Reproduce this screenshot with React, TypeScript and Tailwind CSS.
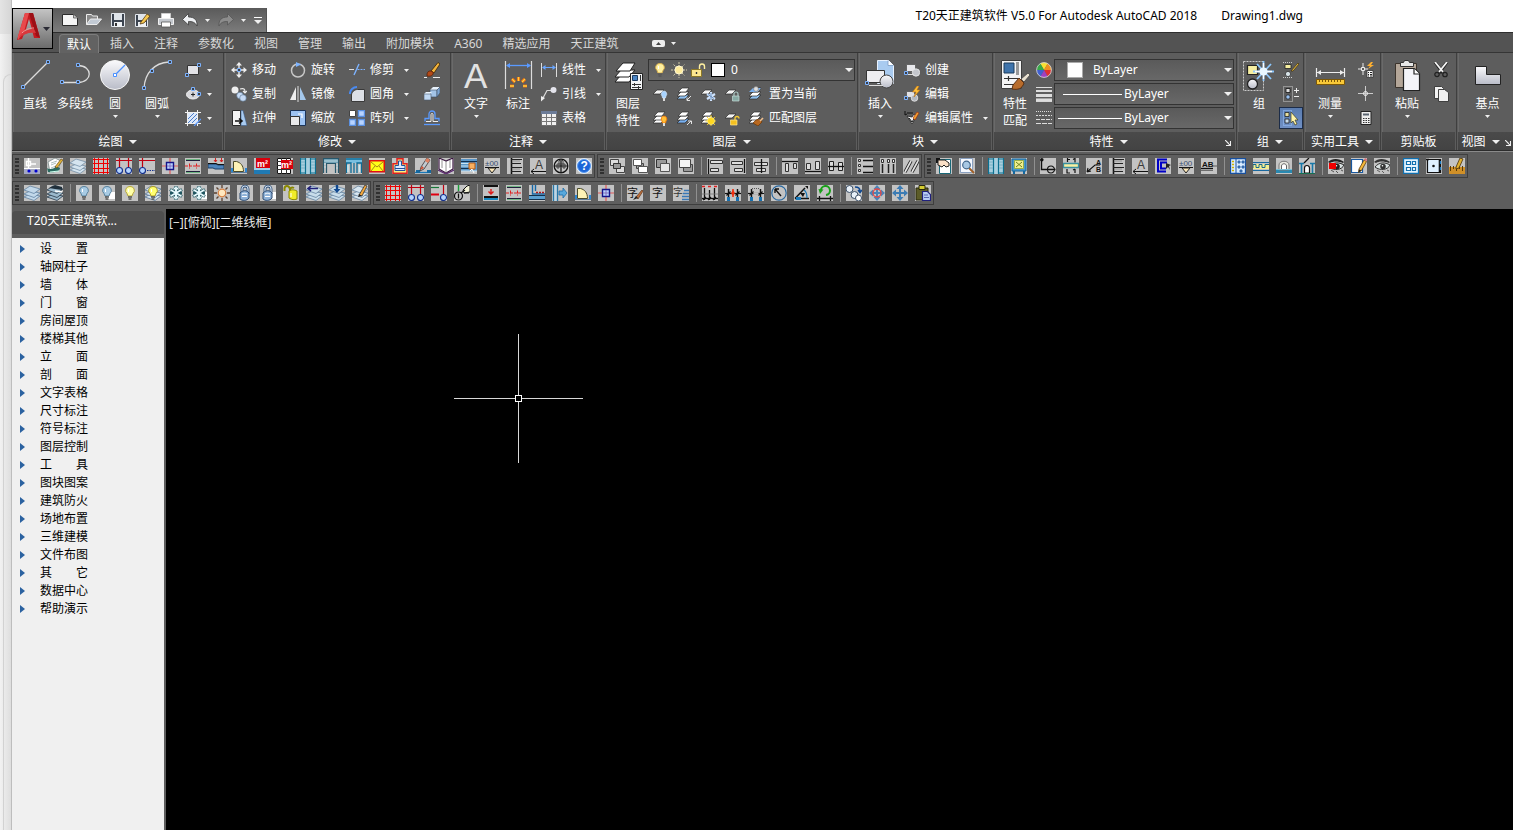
import { useState } from 'react';
import type { ReactNode } from 'react';
import clsx from 'clsx';

// [path, fill, stroke, stroke width, dash] or a text label
type PathShape = [string, string?, string?, number?, string?];
interface TextShape {
    text: string;
    x: number;
    y: number;
    size: number;
    fill: string;
    bold?: boolean;
}
type Shape = PathShape | TextShape;

const circle = (x: number, y: number, r: number) =>
    `M${x - r} ${y}a${r} ${r} 0 1 0 ${r * 2} 0a${r} ${r} 0 1 0 ${-r * 2} 0z`;
const box = (x: number, y: number, w: number, h: number) => `M${x} ${y}h${w}v${h}h${-w}z`;
const node = (x: number, y: number): Shape => [box(x - 1.5, y - 1.5, 3, 3), '#3c4048', '#7db3ff', 1];

const N = 'none';

// ---------- shared pieces ----------

const stack = (fill: string, edge: string): Shape[] => [
    ['M0 12l6-3 10 2-6 4.500z', fill, edge, 0.7],
    ['M0 9l6-3 10 2-6 4.500z', fill, edge, 0.7],
    ['M0 5l6-4 10 3-6 4.500z', fill, edge, 0.7],
];

const sheets = (bottom: string): Shape[] => [
    ['M1 13h8l4-4H5z', bottom, '#2c2c2c', 0.7],
    ['M1 10h8l4-4H5z', '#fff', '#2c2c2c', 0.7],
    ['M2 6h8l3-4H6z', '#fff', '#2c2c2c', 0.7],
];

const sheet: Shape = ['M1 8h7l4-4H5z', '#f4f4f4', '#2c2c2c', 0.7];

const bulb = (fill: string, edge: string): Shape[] => [
    ['M8 1.500a4 4 0 0 0-3 7l1 2.500h4l1-2.500a4 4 0 0 0-3-7z', fill, edge, 1],
    ['M6 12h4M6.500 14h3', N, '#555', 1.3],
    ['M6.500 4v3', N, '#fff', 1],
];

const snow: Shape[] = [
    ['M8 1v14M2 4.500l12 7M2 11.500l12-7', N, '#1f5560', 3],
    ['M5.500 2.500L8 5l2.500-2.500M5.500 13.500L8 11l2.500 2.500M2 8h3M11 8h3', N, '#1f5560', 2.4],
    ['M8 1.500v13M2.500 4.800l11 6.400M2.500 11.200l11-6.400', N, '#eafcff', 1.8],
    ['M5.500 2.500L8 5l2.500-2.500M5.500 13.500L8 11l2.500 2.500', N, '#eafcff', 1.3],
];

const padlock: Shape[] = [
    ['M5 8V4a3 3 0 0 1 6 0v5', N, '#2c4a70', 2.8],
    ['M5 8V4a3 3 0 0 1 6 0v5', N, '#cfe0f2', 1.2],
    ['M3 8c3-3 7-3 9 0v5c-2 3-7 3-9 1z', '#8fb2d8', '#2c4a70', 1],
    ['M5 9c2-1 3-1 5 0M5 11.500h5', N, '#fff', 1],
];

const page: Shape = [box(8, 7, 8, 7), '#fff'];

const cube: Shape[] = [
    ['M8 0v16M0 8h16', N, '#e05a5a', 1.2],
    [box(4.5, 4.5, 7, 7), '#b8d4ff', '#15158a', 1.4],
    ['M8 5v6M5 8h6', N, '#7a5ab0', 0.8],
];

const door: Shape[] = [
    ['M2.500 13.500V3.500h3c4 1 7 4 7 10z', '#fdf3b6', '#4a4a2a', 1],
    ['M0 10h2v5H0zM14 10h2v5h-2z', '#2e86d0'],
    ['M0 14.500h16', N, '#5a7a9a', 1],
];

const axes: Shape[] = [
    ['M0 2.500h16M3.500 0v10M12.500 0v10', N, '#c00010', 1.2],
    [circle(3.5, 12.5, 3), '#b4d4ff', '#14308c', 1.1],
    [circle(12.5, 12.5, 3), '#b4d4ff', '#14308c', 1.1],
];

const gridIcon: Shape[] = [['M0 1.500h16M0 5.500h16M0 10.500h16M0 14.500h16M1.500 0v16M5.500 0v16M10.500 0v16M14.500 0v16', N, '#f00000', 1]];

const wallIcon: Shape[] = [
    ['M1 2.500h14M1 13.500h14', N, '#20203c', 1.2],
    ['M1 1.500h14M1 14.500h14', N, '#58b070', 0.8],
    ['M0 8h16M4.500 5.500v5M11.500 5.500v5', N, '#e02020', 1, '3 1'],
];

const comb: Shape[] = [
    ['M4.500 0v16', N, '#111', 1.6],
    ['M4 1.500h11M4 5.500h10M4 9.500h11M4 13.500h10', N, '#222', 1.2],
    ['M5 3h8M5 11h8', N, '#888', 0.8],
];

const letterArrow: Shape[] = [
    { text: 'A', x: 5, y: 11, size: 12, fill: '#3a3a3a' },
    ['M1 13.500h15M4 11l-3 2.500 3 2.500', N, '#111', 1],
];

const elevation: Shape[] = [
    { text: '±00', x: 1, y: 8, size: 8, fill: '#3c5070' },
    ['M1 9.500h14', N, '#111', 1],
    ['M4 10h8l-4 5z', '#fde8b8', '#222', 1],
];

const moveCross = (color: string): Shape[] => [
    ['M8 2v12M2 8h12', N, color, 2],
    ['M8 0L4.500 4h7zM8 16l-3.500-4h7zM0 8l4-3.500v7zM16 8l-4-3.500v7z', color],
];

const eye = (color: string): Shape[] => [
    ['M0 4c4-4 11-4 16 0l-1 1c-5-2-10-2-13 0z', color],
    ['M1 9c4-5 10-5 15-2-2 5-10 6-15 2z', '#d8e0e0', color, 1],
    [circle(9, 8.5, 2.8), color],
    [circle(8.5, 7.7, 0.8), '#fff'],
    ['M3 12l3 2M8 13l2 2M13 12l2 1', N, color, 0.7],
];

const windowIcon: Shape[] = [
    [box(0, 0, 16, 16), '#a8cfdf'],
    ['M.5 0v16M5.500 0v16M10.500 0v16M15.500 0v16M0 1h6M10 1h6M0 15h6M10 15h6', N, '#0c7090', 1.2],
    ['M1 4h4M1 7h4M1 10h4M11 4h4M11 7h4M11 10h4', N, '#7ab0c4', 1],
];

const pencil: Shape[] = [
    ['M8 11L13 2l2.500 1.500-5 9-3 2z', '#f5b83a', '#5a3c10', 0.8],
    ['M13 2l1-2 2 1-.5 2.500z', '#d8707a'],
    ['M7.500 14.500l.5-3 2.500 1z', '#222'],
];

const dims: Shape[] = [
    ['M0 8.500h16', N, '#111', 1.2],
    ['M3.500 4v8M12.500 4v8', N, '#111', 1.4],
    ['M1.500 10.500l4-4M10.500 10.500l4-4', N, '#111', 1.2],
    ['M2 12h3v4H2zM11 12h3v4h-3z', '#1670b0'],
];

// ---------- toolbar icons ----------

const toolIcons: Record<string, Shape[]> = {
    '工程管理': [
        [box(0, 10, 16, 6), '#a4a8c4'],
        ['M0 10.500h16', N, '#fff', 1],
        ['M4.500 0v10M2.500 3.500h4v4h-4zM7 6h5', N, '#fff', 1.4],
        [circle(5, 13, 1.6), '#0000d0'],
        [circle(12, 13, 1.6), '#0000d0'],
    ],
    '图纸编辑': [
        ['M1 4l7-4 6 3-3 9-8 2z', '#fff', '#7a8a8a', 0.8],
        ['M4 5l6-2M4 7l5-2M4 10l5-2', N, '#9ab0b0', 0.8],
        ['M0 10c2 2 8 1 9-2l4 2c0 4-7 5-12 4z', '#2a6a60'],
        ['M3 14l9-1', N, '#cfe', 1],
        ['M8 9l6-8 2 1-6 8z', '#e2b53a', '#5a3c10', 0.6],
    ],
    '图层': stack('#d5e4ef', '#6a86a0'),
    '轴网': gridIcon,
    '轴网标注': axes,
    '单轴标注': [
        ['M0 2.500h16M3.500 0v10', N, '#c00010', 1.2],
        [circle(3.5, 12.5, 3), '#b4d4ff', '#14308c', 1.1],
        ['M8 12.500h8', N, '#14308c', 1.2, '1.500 1'],
    ],
    '标准柱': cube,
    '绘制墙体': wallIcon,
    '墙体分段': [
        ['M0 6h8l2 1h6v4H7l-2-1H0z', '#4f86bc', '#1c3f68', 1],
        ['M0 5.500h8l2 1h6', N, '#111', 1],
        ['M7.500 0v4M13.500 0v4M6 2l1.500 2L9 2M12 2l1.500 2L15 2', N, '#d02020', 1],
    ],
    '门窗': door,
    '房间面积': [
        [box(0, 11, 16, 5), '#1f7ab4'],
        [box(0, 10, 16, 2), '#9ed0ec'],
        [box(2, 0, 14, 10), '#d8000c'],
        { text: 'm²', x: 3, y: 9, size: 9, fill: '#fff', bold: true },
    ],
    '面积表': [
        [box(0.5, 0.5, 13, 15), '#fff', '#111', 1],
        ['M0 3.500h14M0 7.500h14M0 11.500h14M4.500 0v16M9.500 0v16', N, '#333', 1],
        [box(4, 2, 12, 9), '#d8000c'],
        { text: 'm²', x: 4, y: 10, size: 9, fill: '#fff', bold: true },
    ],
    '直线梯段': windowIcon,
    '楼梯': [
        [box(0, 0, 16, 5), '#74a4b8'],
        ['M0 .5h16M3.500 15V5.500h9V15M.5 15V1M15.500 15V1', N, '#28586c', 1.2],
        ['M1 3h14M1 6h2M1 9h2M13 7h2M13 10h2', N, '#c0dce4', 1],
    ],
    '电梯': [
        [box(0, 0, 16, 5), '#78bfe0'],
        ['M0 1h16M0 5h5v10M16 5h-5v10M8 5v10M.5 5v10M15.500 5v10', N, '#0c6c98', 1.3],
        ['M2 7v7M13.500 7v7', N, '#c8eaf4', 1.4],
    ],
    '图块': [
        [box(0.75, 2.75, 14.5, 11), '#ffff18', '#e01010', 1.5],
        ['M2 4l6 5 6-5M2 13l4-5M14 13l-4-5', N, '#a88418', 1],
    ],
    '图案': [
        ['M5 .8h6v5h4v9.400H1V5.800h4z', '#f8f080', '#e02020', 1.5],
        ['M6.500 3h3v4.500h3.500v5H3v-5h3.500z', '#dcebff', '#2050a0', 1],
        ['M3 10.500h10', N, '#2050a0', 1],
    ],
    '线图案': [
        ['M0 14.500h16', N, '#1878b8', 1.3],
        [box(1, 12, 4, 3), '#1468a0'],
        [box(12, 12, 4, 3), '#1468a0'],
        ['M6 9l6-9 3 2-6 9-4 2z', '#c2cbd0', '#3a3030', 0.8],
        ['M12 0l3 2-2 3-3-2z', '#e08060'],
        ['M5 12l2-4 2 2z', '#d05030'],
    ],
    '图库': [
        ['M8 3L1 0v11l7 4 7-4V0z', '#fff', '#3a1840', 1.2],
        ['M8 3v12M4 2v8M12 2v8', N, '#777', 0.8],
        ['M0 12l8 4 8-4', N, '#5a2870', 1.2],
    ],
    '图纸目录': [
        [box(0, 1, 16, 12), '#5a96c8'],
        ['M0 3.500h16M0 10.500h8', N, '#103050', 1.2],
        ['M0 5.500h8M0 8h8M0 13h16', N, '#c8e4f4', 1],
        [box(8, 5, 6, 6), '#f8b060', '#b05818', 1],
        ['M9 13l2-2 2 4', N, '#fff', 1],
    ],
    '标高标注': elevation,
    '逐点标注': comb,
    '箭头引注': letterArrow,
    '指北针': [
        [circle(8, 8, 6.8), N, '#111', 1.3],
        ['M8 1v14M1.500 8h13', N, '#111', 1.2],
        ['M6 3l2-2 2 2v3H6zM4 6h2v4H4zM10 6h2v4h-2z', N, '#333', 0.9],
    ],
    '在线帮助': [
        [circle(8, 8, 7.8), '#e8f4ff'],
        [circle(8, 8, 6.5), '#1c66d8', '#5a9af0', 1],
        { text: '?', x: 4.5, y: 12, size: 12, fill: '#fff', bold: true },
    ],
    '前置': [
        [box(1.5, 1.5, 8, 6), '#ddd', '#444', 1],
        [box(7.5, 8.5, 8, 6), '#ddd', '#444', 1],
        [box(4.5, 5.5, 7, 5), '#999', '#333', 1],
    ],
    '后置': [
        [box(4.5, 5.5, 7, 5), '#999', '#444', 1],
        [box(1.5, 1.5, 8, 6), '#fff', '#555', 1],
        [box(6.5, 8.5, 9, 6), '#fff', '#555', 1],
    ],
    '置于对象之上': [
        [box(1.5, 1.5, 10, 8), '#999', '#333', 1],
        [box(5.5, 5.5, 9, 8), '#e6e6e6', '#555', 1],
    ],
    '置于对象之下': [
        [box(5.5, 6.5, 9, 7), '#999', '#444', 1],
        [box(1.5, 1.5, 11, 8), '#f4f4f4', '#444', 1],
    ],
    '左对齐': [
        ['M1.500 1v15', N, '#111', 1.3],
        [box(3.5, 2.5, 12, 3), '#ddd', '#333', 1],
        [box(3.5, 10.5, 8, 3), '#ddd', '#333', 1],
    ],
    '右对齐': [
        ['M14.500 1v14', N, '#111', 1.3],
        [box(1.5, 3.5, 11, 3), '#ddd', '#333', 1],
        [box(4.5, 10.5, 8, 3), '#ddd', '#333', 1],
    ],
    '居中': [
        [box(1.5, 4.5, 13, 3), '#ddd', '#333', 1],
        [box(3.5, 10.5, 9, 3), '#ddd', '#333', 1],
        ['M8.500 1v14', N, '#111', 1.3],
    ],
    '顶对齐': [
        ['M0 3.500h16', N, '#111', 1.3],
        [box(3.5, 5.5, 3, 8), '#ddd', '#333', 1],
        [box(11.5, 5.5, 3, 5), '#ddd', '#333', 1],
    ],
    '底对齐': [
        ['M0 13.500h16', N, '#111', 1.3],
        [box(1.5, 5.5, 4, 6), '#ddd', '#333', 1],
        [box(10.5, 3.5, 4, 8), '#ddd', '#333', 1],
    ],
    '水平居中': [
        [box(1.5, 3.5, 4, 9), '#ddd', '#222', 1],
        [box(10.5, 4.5, 4, 8), '#ddd', '#222', 1],
        ['M0 8.500h16', N, '#111', 1.3],
    ],
    '行间距': [
        ['M6 2.500h10M6 8.500h10M6 14.500h10', N, '#111', 1.3],
        [box(1.5, 1.5, 2, 2), '#eee', '#333', 1],
        [box(1.5, 6.5, 2, 2), '#eee', '#333', 1],
        [box(1.5, 11.5, 2, 2), '#eee', '#333', 1],
    ],
    '列间距': [
        ['M2.500 6v9M8.500 6v9M13.500 6v9', N, '#222', 1.5],
        [box(1.5, 1.5, 2, 3), '#eee', '#333', 1],
        [box(7.5, 1.5, 2, 3), '#eee', '#333', 1],
        [box(12.5, 1.5, 2, 3), '#eee', '#333', 1],
    ],
    '平行': [
        ['M2 14L8 3M9 14l6-11', N, '#222', 3.4],
        ['M2 14L8 3M9 14l6-11', N, '#e4e4e4', 1.6],
    ],
    '对象选择': [
        [box(3.5, 1.5, 11, 14), '#fff', '#186878', 1],
        ['M0 0h4v5H0z', '#111'],
        ['M2 2h7l4 3v3l-3 1-2-2-2 2-4-2z', '#fbe0c8', '#222', 1],
    ],
    '图形查看': [
        [box(1.5, 0.5, 12, 14), '#f6f9ff', '#8aa0c0', 1],
        ['M10 10l5 5', N, '#a06028', 2],
        [circle(7.5, 7, 3.8), '#a8c8e4', '#44688c', 1.2],
    ],
    '绘制窗': windowIcon,
    '插入设备': [
        [box(1, 1, 14, 12), '#4a98cc', '#1468a0', 1],
        [box(3.5, 2.5, 9, 8), '#f0f090', '#9ab048', 1],
        ['M5 4l6 5M11 4l-6 5', N, '#6a8020', 1],
        ['M3 13v3M13 13v3', N, '#1468a0', 2],
    ],
    '坐标标注': [
        ['M1.500 1.500v10h14', N, '#111', 1.4],
        [circle(1.8, 1.8, 1.8), '#111'],
        [circle(11, 11.5, 3.5), N, '#111', 1.1],
    ],
    '剖切符号': [
        ['M4 1.500h3M10 1.500l2-1v4M4.500 0v4M4 11v4h3M12 11v4M10 12l2-1', N, '#111', 1.2],
        [box(0.5, 5.5, 15, 4), '#f8f0a0', '#3a90a0', 1.3],
    ],
    '引出标注': [
        ['M1 14l8-7h5M1 14l1-4M1 14l4-1', N, '#111', 1.1],
        { text: 'A', x: 10, y: 7, size: 7, fill: '#111', bold: true },
        { text: 'B', x: 10, y: 14, size: 7, fill: '#111', bold: true },
    ],
    '做法标注': comb,
    '箭头文字': letterArrow,
    '索引符号': [
        ['M12 1.500H3v12h8M12 4.500H6v6h5', N, '#0000c8', 2],
        ['M11 5l5 2-2 1 1 4-2-3-2 2z', '#222'],
    ],
    '标高检查': elevation,
    '图名标注': [
        { text: 'AB', x: 1, y: 9, size: 8, fill: '#111', bold: true },
        ['M0 10.500h12', N, '#111', 1.4],
        ['M0 12.500h12', N, '#555', 0.8],
        ['M12 8h4', N, '#777', 1.4],
    ],
    '房间布置': [
        [box(0.5, 0.5, 15, 15), '#d8ecff', '#1850a0', 1.3],
        ['M6 0v16', N, '#1850a0', 1],
        ['M2 3.500h2M2 6.500h2M2 9.500h2M2 12.500h2', N, '#d0b000', 1.6],
        ['M8 3h2v2H8zM12 3h2v2h-2zM8 8h2v2H8zM12 8h2v2h-2zM10 12h2v2h-2z', '#6a9ac8', '#1850a0', 0.8],
    ],
    '散水': [
        ['M0 4.500h16M0 12.500h16', N, '#1868a0', 1.2],
        [box(0, 6, 16, 5), '#f6ee90'],
        ['M0 10V6.500h3v3h3v-3h3v3h3v-3h4', N, '#186890', 1],
    ],
    '屋顶': [
        [box(0, 12, 16, 3), '#2888b0'],
        ['M3 12V7c0-5 10-5 10 0v5z', '#e8e8e0', '#777', 1],
        ['M5.500 12V8c0-3 5-3 5 0v4', '#fff', '#666', 1],
        ['M0 11.500h16', N, '#77c0d8', 1],
    ],
    '栏杆': [
        ['M0 5.500h5M11 5.500h5M2.500 6v9M13.500 6v9', N, '#1878a8', 1.6],
        ['M5 5l5-5', N, '#111', 1.3],
        ['M5.500 15v-5a2.500 2.500 0 0 1 5 0v5z', '#fff', '#111', 1.2],
        ['M0 15.500h16', N, '#187050', 1],
    ],
    '隐藏对象': [...eye('#222'), [box(1, 5, 7, 6), '#f00000']],
    '编辑对象': [[box(0.5, 1.5, 11, 13), '#fff', '#1858a0', 1.2], ...pencil],
    '显示对象': eye('#333'),
    '立面窗': [
        [box(0.5, 0.5, 15, 15), '#e4f4ff', '#1070b0', 1.3],
        [box(3.5, 3.5, 4, 3), '#fff', '#1070b0', 1.2],
        [box(9.5, 3.5, 3, 3), '#fff', '#1070b0', 1.2],
        [box(3.5, 9.5, 4, 3), '#fff', '#1070b0', 1.2],
        [box(9.5, 9.5, 3, 3), '#fff', '#1070b0', 1.2],
    ],
    '布局': [
        [box(1.5, 1.5, 13, 13), '#dff0ff', '#111', 1.2],
        ['M0 1.500h3M13.500 2v12', N, '#111', 1.6],
        ['M14.500 3v3M14.500 9v3', N, '#1878c0', 1.3],
        [circle(7.5, 8, 1.3), '#111'],
    ],
    '测量': [
        [box(0, 9, 16, 7), '#d09028'],
        ['M1.500 8v5M4.500 8v3M7.500 8v5M10.500 8v3M13.500 8v5', N, '#5a3c08', 1],
        ['M7 9l4-9 3 1-4 9-3 1z', '#e0b030', '#4a3008', 0.8],
    ],
    '图层管理': stack('#c2d8ea', '#58789a'),
    '图层工具': [...stack('#9ab8cc', '#182838'), ['M2 3l6-3 7 2v3L8 4z', '#20303c'], ['M8 6l7 1', N, '#fff', 1.4]],
    '关闭图层': bulb('#a8cbe4', '#56809c'),
    '关闭其它': [page, ...bulb('#a8cbe4', '#56809c')],
    '打开图层': bulb('#ffffa8', '#b8a838'),
    '打开全部': [...stack('#d5e4ef', '#4a6a8c'), ...bulb('#ffff70', '#a89828')],
    '冻结图层': snow,
    '冻结其它': [page, ...snow],
    '解冻图层': [
        ['M8 0v3M8 13v3M0 8h3M13 8h3M2.500 2.500l2 2M11.500 11.500l2 2M2.500 13.500l2-2M11.500 4.500l2-2', N, '#5a4030', 1.3],
        [circle(8, 8, 3.8), '#ffe8c0', '#d88040', 1.2],
    ],
    '锁定图层': padlock,
    '锁定其它': [page, ...padlock],
    '解锁图层': [
        ['M1.500 6V3.500a2.500 2.500 0 0 1 5 0M7 8V4a3 3 0 0 1 4-1', N, '#8a8800', 2],
        ['M6 6c3-2 6-1 8 0v8c-3 1-5 1-8-1z', '#f0ec28', '#8a8800', 1],
        ['M8 8v4', N, '#fff', 1],
    ],
    '图层恢复': [...stack('#c8dcea', '#587898'), ['M3 3.500h9M5 1L2 3.500 5 6', N, '#202078', 1.6]],
    '合并图层': [...stack('#c8dcea', '#587898'), ['M8 0v5', N, '#104890', 2.4], ['M4.500 4h7L8 8z', '#104890']],
    '图元改层': [...stack('#d8e6f0', '#587898'), ['M7 10l6-10 2 1-5 10z', '#f4a83c', '#333', 0.8], ['M6 12l1-3 3 2z', '#222']],
    '添加轴线': [
        ['M0 2.500h8', N, '#187838', 1.2],
        ['M12.500 0v10', N, '#c00010', 1.2],
        ['M0 9.500h8', N, '#e00010', 2],
        [circle(12.5, 12.5, 3), '#b4d4ff', '#14308c', 1.1],
    ],
    '轴号编辑': [
        ['M4.500 0v6', N, '#18a038', 1.4],
        [circle(4.5, 11, 4), N, '#111', 1.2],
        ['M4.500 8.500v5', N, '#111', 1.3],
        ['M9 5l4-4 3-1v7l-6 1z', '#f4f4d8', '#111', 1],
        ['M7 8l4-3M10 8l5 0', N, '#111', 1.2],
    ],
    '墙厚': [
        [box(1, 0, 14, 2), '#111'],
        ['M8 4v5M5.500 6.500L8 9l2.500-2.500', N, '#e01818', 1.4],
        [box(1, 11, 14, 2), '#111'],
        [box(1, 13, 14, 2), '#1888c0'],
    ],
    '边线对齐': wallIcon,
    '净距偏移': [
        ['M3.500 0v9h13M6.500 0v6', N, '#1468a8', 1.4],
        [box(0, 11, 16, 3), '#5aa0d0'],
        ['M7 7.500h9', N, '#b01818', 1.6, '2 1'],
        ['M0 10.500h16M0 14.500h16', N, '#12304c', 1],
    ],
    '墙体造型': [
        ['M1.500 0v16M5.500 0v16', N, '#2878a8', 1.4],
        ['M3.500 0v16', N, '#b8d8ec', 2],
        ['M7 6h4V3l4 5-4 5v-3H7z', '#58a8dc', '#1c6ca8', 0.8],
    ],
    '普通门': door,
    '角柱': cube,
    '文字样式': [
        { text: '字', x: 0, y: 12, size: 11, fill: '#111' },
        ['M9 12l6-7 1 1-5 8z', '#c0703c', '#5a3418', 0.7],
        ['M6 15l3-4 2 2z', '#222'],
    ],
    '单行文字': [{ text: '字', x: 2, y: 12, size: 11, fill: '#111' }],
    '多行文字': [
        { text: '字', x: 0, y: 11, size: 10, fill: '#333' },
        ['M11 5.500h5M10 8.500h6M9 11.500h7M9 14.500h7', N, '#3878b8', 1.6],
    ],
    '门窗标注': [
        ['M0 1.500h16', N, '#e02020', 1.6, '3 3'],
        ['M0 13.500h16', N, '#111', 1.3],
        ['M2.500 3v12M7.500 5v10M12.500 3v12', N, '#111', 1.3],
        ['M1 15l3-3M6 15l3-3M11 15l3-3', N, '#111', 1.3],
        ['M0 9h16', N, '#777', 0.8],
    ],
    '裁剪延伸': [...dims, ['M8 4v8', N, '#f03010', 1.6], ['M6 8l2-3 2 3-2 3z', '#f03010']],
    '连接尺寸': [...dims, ['M5.500 8.500h5', N, '#c3c3c3', 1.6], ['M4 3.500h8', N, '#555', 1, '1 1']],
    '半径标注': [
        [circle(8, 8, 7.2), N, '#2868a0', 1.2],
        ['M10 11L4 4M4 4h4M4 4v4', N, '#111', 1.4],
    ],
    '角度标注': [
        ['M1 13.500L11 3M1 13.500h14', N, '#111', 1.5],
        ['M10 5c3 2 3 5 3 8', N, '#1878b8', 1.2],
        ['M6 8h5l-2 4zM11 1h3v3z', '#111'],
        [box(2, 12, 5, 3), '#1878b8'],
    ],
    '尺寸自调': [
        ['M4 6a4.500 4.500 0 1 1 5 4', N, '#18a018', 2],
        ['M1.500 4l5 .5L3 9z', '#18a018'],
        ['M0 13.500h16M2.500 11v5M13.500 11v5', N, '#111', 1.3],
    ],
    '自由复制': [
        [circle(3.5, 4, 3.5), '#e8f0f8', '#3c5068', 1],
        [circle(8.5, 10, 3.5), '#e8f0f8', '#3c5068', 1],
        [circle(12.5, 13, 3), '#fff', '#3c5068', 1],
        ['M9 2c3 0 5 1 5 4M12 5l2 2.500L16 5', N, '#104890', 1.5],
    ],
    '自由移动': [...moveCross('#4a84b8'), [circle(8, 8, 4), N, '#e04848', 1.4]],
    '移位': moveCross('#3c7cb4'),
    '自由粘贴': [
        [box(1, 3, 12, 12), '#5c5c28', '#28280c', 1],
        [box(4, 0.5, 6, 4), '#d4cc30', '#28280c', 1],
        ['M7.500 6.500h5l3 3v6h-8z', '#b8ccf4', '#20207c', 1.2],
        ['M9 10h4M9 12.500h5', N, '#4858a8', 0.9],
    ],
};

const toolRows: string[][][] = [
    [
        ['工程管理 图纸编辑 图层 轴网 轴网标注 单轴标注 标准柱 绘制墙体 墙体分段 门窗 房间面积 面积表 直线梯段 楼梯 电梯 图块 图案 线图案 图库 图纸目录 标高标注 逐点标注 箭头引注 指北针 在线帮助'],
        ['前置 后置 置于对象之上 置于对象之下', '左对齐 右对齐 居中', '顶对齐 底对齐 水平居中', '行间距 列间距 平行'],
        [
            '对象选择 图形查看',
            '绘制窗 插入设备',
            '坐标标注 剖切符号 引出标注 做法标注 箭头文字 索引符号 标高检查 图名标注',
            '房间布置 散水 屋顶 栏杆',
            '隐藏对象 编辑对象 显示对象',
            '立面窗 布局 测量',
        ],
    ],
    [
        ['图层管理 图层工具', '关闭图层 关闭其它 打开图层 打开全部 冻结图层 冻结其它 解冻图层 锁定图层 锁定其它 解锁图层 图层恢复 合并图层 图元改层'],
        [
            '轴网 轴网标注 添加轴线 轴号编辑',
            '墙厚 边线对齐 净距偏移 墙体造型 普通门 角柱',
            '文字样式 单行文字 多行文字',
            '门窗标注 裁剪延伸 连接尺寸 半径标注 角度标注 尺寸自调',
            '自由复制 自由移动 移位 自由粘贴',
        ],
    ],
];

// ---------- ribbon icons ----------

const gray = '#dcdcdc';
const blue = '#7db3ff';

const smallIcons: Record<string, Shape[]> = {
    new: [['M.5 2.500h11l4 3.500v7.500H.5z', '#f4f4f4', '#2a2a2a', 1], ['M11.500 2.500V6h4', '#c8c8c8', '#555', 0.8]],
    open: [['M.5 12.500v-10h5l1 1.500h5v3', '#888', '#ededed', 1], ['M.5 12.500l4-5.500h11l-4.500 5.500z', '#c2cad4', '#ededed', 1]],
    save: [[box(1.5, 1.5, 13, 13), '#3c4450', '#e0e4ea', 1], [box(4, 2, 8, 6), '#dfe4ea'], [box(4, 10, 8, 5), '#eef1f4'], [box(5, 11, 2, 3), '#333']],
    saveas: [
        [box(1.5, 2.5, 12, 12), '#3c4450', '#e0e4ea', 1],
        [box(4, 3, 8, 5), '#dfe4ea'],
        [box(4, 10, 8, 5), '#eef1f4'],
        ['M7 10l6-8 3 2-6 7-4 1z', '#f6c850', '#5a3c10', 0.8],
    ],
    print: [
        [box(3.5, 1.5, 9, 5), '#fff', '#ccc', 1],
        ['M.5 6.500h15v6H.5z', '#c4c8ce', '#f0f0f0', 1],
        [box(3.5, 10, 9, 5), '#fff', '#555', 0.8],
    ],
    undo: [['M.5 7.500l6-6V5c6 0 9 3 8.500 9-2-4-5-4.500-8.500-4.500v3.500z', '#eef0f3', '#3c3c3c', 0.8]],
    redo: [['M15.500 7.500l-6-6V5C3.500 5 .5 8 1 14c2-4 5-4.500 8.500-4.500v3.500z', '#8c8c8c', '#555', 0.8]],
    rect: [[box(2.5, 3.5, 11, 9), '#e2e2e6', '#333', 1], node(2, 13), node(14, 3)],
    ellipse: [['M1.500 8.500a6.500 4.500 0 1 0 13 0a6.500 4.500 0 1 0-13 0z', '#d8d8dc', '#f4f4f4', 1], ['M6 8.500h4M8 6.500v4', N, '#222', 1], node(8, 3), node(14, 8)],
    hatch: [
        [box(3, 3, 10, 10), '#dce8fa'],
        ['M3 9l6-6M3 13L13 3M7 13l6-6', N, '#4a7cc8', 1],
        ['M2.500 0v16M12.500 0v16M0 2.500h16M0 13.500h16', N, '#f0f0f0', 1],
        ['M9 16l7-7', N, '#5a9aff', 1.2],
    ],
    move: [['M8 0L5 3.500h6zM8 16l-3-3.500h6zM0 8l3.500-3v6zM16 8l-3.500-3v6z', '#eee'], ['M8 3v3M8 10v3M3 8h3M10 8h3', N, '#eee', 1.4], node(8, 8)],
    rotate: [[circle(8, 8.5, 6.5), N, '#c8c8c8', 1.5], ['M6 0l5 2.500L6 5z', blue]],
    trim: [['M0 7.500h5', N, '#ddd', 1], ['M8.500 7.500h8', N, blue, 1, '2 1'], ['M5 13L10 2', N, blue, 1.4]],
    brush: [
        ['M7 9L14 .5l2 1.500-6 9z', '#f2b43c', '#3a2408', 0.8],
        ['M3 13c0-4 3-5 6-3 1 3-2 5-6 4z', '#b44a18', '#5a2208', 0.8],
        ['M0 15.500h3M9 15.500h7', N, '#eee', 1],
    ],
    copy: [[circle(4, 4, 3.5), '#eee'], ['M9 3c4-1 5 0 5 3M12 5l2 2 2-2', N, '#eee', 1.2], [circle(9, 9.5, 3.3), '#c6daf4', '#55708c', 0.6], [circle(12, 12, 3.3), '#c6daf4', '#55708c', 0.6]],
    mirror: [['M6 1v13H0z', '#f0f0f0'], ['M10 1v13h6z', '#a4c8ec'], ['M8 0v16', N, '#ddd', 1]],
    fillet: [['M2.500 15.500V9c0-3 3-5.500 6-5.500h7v12z', '#dde0e6', '#3a3a3a', 1], ['M.8 8C1 4 4 1 8 1', N, '#4a8af0', 2]],
    solid: [
        ['M6 4l3-3h7l-3 3z', '#e8f2fc'],
        ['M6 4h7v7H6z', '#a3c4e8', '#3a4c60', 0.6],
        ['M13 4l3-3v6l-3 4z', '#7da6d4', '#3a4c60', 0.6],
        ['M0 8l2-2h6L6 8z', '#e8f2fc'],
        ['M0 8h7v6H0z', '#c0d8f2', '#4a5c70', 0.6],
    ],
    stretch: [['M1.500 .5h8v15h-8z', '#f2f2f2', '#2a2a2a', 1], ['M10 .5h2l4 15h-6z', '#a9cbf0', '#3a5a88', 0.6], ['M4 11h6M8 8.500l3 2.500-3 2.500', N, '#111', 1.6]],
    scale: [[box(0.5, 0.5, 15, 15), '#9cc2f2', '#1c3458', 1], [box(0.5, 6.5, 9, 9), '#e8e8ea', '#333', 1], ['M8 4h4v4', N, '#fff', 1.2]],
    array: [[box(0.5, 0.5, 6, 6), '#fff', '#444', 1], [box(9.5, 0.5, 6, 6), '#b8d4ff', '#5a90e0', 1.4], [box(0.5, 9.5, 6, 6), '#b8d4ff', '#5a90e0', 1.4], [box(9.5, 9.5, 6, 6), '#b8d4ff', '#5a90e0', 1.4]],
    offset: [
        ['M0 14.500h16', N, '#5a9aff', 1.3],
        ['M1 11.500v-3h4V4a3 3 0 0 1 6 0v4.500h4v3', N, '#5a9aff', 1.3],
        ['M2 11.500h5V4.500a1 1 0 0 1 2 0v7h5', N, '#eee', 1],
    ],
    linear: [['M.5 1v14M15.500 1v14', N, gray, 1], ['M3 5.500h10', N, '#6aa6ff', 1], ['M1 5.500L4.500 3v5zM15 5.500L11.500 3v5z', '#6aa6ff']],
    leader: [['M2 12L6 4.500h4', N, gray, 1.2], ['M0 15.500V10l4 2z', '#eee'], [circle(12.5, 4, 3), '#e4e4ec']],
    table: [[box(0.5, 1.5, 15, 14), '#f0f0f0', '#444', 0.6], [box(0, 1, 16, 3), '#6c7c98'], ['M0 7.500h16M0 11.500h16M5.500 4v12M10.500 4v12', N, '#777', 1]],
    layOff: [sheet, ['M12 5a3 3 0 0 0-2 5l.5 2h3l.5-2a3 3 0 0 0-2-5z', '#a8d4ff', '#dff0ff', 0.6], ['M12 12v3', N, '#ddd', 2]],
    layIso: [...sheets('#8fc0f0'), ['M15 10l-4 4M11 11.500V14.500h3', N, '#e4e4e4', 1]],
    layFrz: [sheet, ['M11 6v9M7 8l8 5M7 13l8-5', N, '#cfe4ff', 2.2], ['M11 7v7M8 8.500l6 4', N, '#5a80b0', 0.8]],
    layLck: [sheet, ['M10 10V8a2 2 0 0 1 4 0v2', N, '#a8c4c0', 1.2], [box(8.5, 10, 6.5, 5), '#88aaa4', '#c4dcd8', 0.7]],
    layCur: [...sheets('#8fc0f0'), ['M1 6h8l4-4H5z', '#78b0f0'], [circle(8, 3, 2.4), '#e0e0e0', '#777', 0.6]],
    layOn: [...sheets('#fff'), ['M12 6a3 3 0 0 0-2 5l.5 2h3l.5-2a3 3 0 0 0-2-5z', '#ffc038', '#f08010', 1], ['M12 13v3', N, '#ddd', 2]],
    layUniso: [...sheets('#78b0f0'), ['M11 15l4-4M12 11h3.500v3', N, '#e4e4e4', 1]],
    layThw: [...sheets('#fff'), ['M11 5v11M5.500 11h11M7 7l8 8M7 15l8-8', N, '#f8d020', 0.9], [circle(11, 11, 3.6), '#ffd820', '#fff0a0', 0.6]],
    layUlk: [sheet, ['M11 10V8.500a2 2 0 0 1 4 0', N, '#f8cc30', 1.3], [box(6.5, 10, 6.5, 5), '#f4c020', '#ffe890', 0.7]],
    layMch: [...sheets('#fff'), ['M8 10c4-1 5 0 6 2l-4 4-5-3z', '#b86820', '#6a3808', 0.7], ['M12 11l3-3', N, '#f0c090', 1.6]],
    lightbulb: bulb('#fff0a0', '#d8b050'),
    sun: [['M8 0v16M0 8h16M2.500 2.500l11 11M2.500 13.500l11-11', N, '#cfc8a8', 1, '2 1'], [circle(8, 8, 4), '#ffec9c', '#fff7d0', 1]],
    unlock: [['M9.500 8V4.500a2.500 2.500 0 0 1 5 0V7', N, '#fff0a0', 1.4], [box(1.5, 7.5, 10, 7), '#ffe890', '#8c7828', 1], ['M6.500 10v2', N, '#333', 1.4]],
    blkCreate: [[box(2.5, 2.5, 9, 7), '#e8e8ec', '#555', 0.8], [circle(12, 10.5, 3.7), '#c4c6cc', '#f0f0f0', 0.8], node(2, 11), ['M4 12.500h6', N, '#ddd', 1]],
    blkEdit: [[box(2.5, 5.5, 8, 6), '#e0e0e4', '#555', 0.8], [circle(10.5, 12, 3.3), '#b4b8be', '#e8e8e8', 0.8], node(2, 12), ['M13 0L8.500 6H12l-2 5 6-7h-3l2-4z', '#ffc038', '#c07010', 0.6]],
    attEdit: [['M1 1v4l2-1M3 3h6', N, '#111', 1], ['M3 6l5 8 5-8-3-2-2 3z', '#f0f0f0', '#222', 0.8], ['M5 8l3 4 2-3', N, '#111', 1], ['M9 8l4-6 2 1-4 7z', '#f0a030', '#a03010', 0.7]],
    lineweight: [['M0 1.500h16', N, '#ddd', 1], ['M0 5h16', N, '#ddd', 2], ['M0 9.500h16', N, '#ddd', 3], ['M0 14.200h16', N, '#ddd', 3.5]],
    linetype: [['M0 1.500h16', N, '#ddd', 1, '1 1'], ['M0 5.500h16', N, '#ddd', 1, '2 1'], ['M0 9.500h16', N, '#ddd', 1, '4 1'], ['M0 13.500h16', N, '#ddd', 1, '5 1']],
    grpEdit: [[box(2, 2.5, 6, 4), '#f6eea0', '#222', 0.8], [circle(5, 12, 2.6), '#d8e4e8', '#333', 0.8], ['M0 .5h9M0 15.500h9', N, '#ccc', 1, '1 1'], ['M8 9l7-8 1 1-6 7z', '#f0c848', '#3c2c08', 0.7]],
    grpAdd: [['M.5 .5h9v15h-9z', N, '#ccc', 1, '1 1'], [box(3, 2.5, 4, 4), '#ddd', '#111', 0.8], [circle(5, 11, 2.2), '#98c0f0', '#222', 0.8], ['M11 4.500h5M13.500 2v5M11 10.500h5', N, '#eee', 1]],
    grpSel: [['M.5 .5h8v15h-8z', N, '#9cc4ff', 1, '1 1'], [box(2, 2.5, 4, 4), '#e8e0a0', '#222', 0.8], [box(2, 9, 4, 4), '#c8dcec', '#222', 0.8], ['M8 2l7 8h-3l2 4-2 1-2-4-2 2z', '#fff4a8', '#3c3c20', 0.7]],
    quick: [
        ['M5 1v12M0 7h5M7 7h3', N, '#eee', 1],
        [box(3.5, 5.5, 3, 3), '#5c5c5c', '#eee', 1],
        ['M13 0l-4 4h3l-2 3 6-4h-3l2-3z', '#ffb030'],
        [box(9, 8.5, 6, 7), '#fff', '#333', 0.8],
        ['M10 10.500h1M12 10.500h2M10 12.500h1M12 12.500h2M10 14h1M12 14h2', N, '#222', 1],
    ],
    point: [['M7.500 0v15M0 7.500h15', N, '#ccc', 1], [circle(7.5, 7.5, 2), N, '#eee', 1]],
    calc: [[box(3, 1.5, 10, 13), '#ededed', '#222', 1], [box(5, 3.5, 6, 2), '#5a6470'], ['M5 8.500h1.500M7.500 8.500H9M10 8.500h1.500M5 10.500h1.500M7.500 10.500H9M10 10.500h1.500M5 12.500h1.500M7.500 12.500H9M10 12.500h1.500', N, '#333', 1]],
    cut: [
        ['M2 0l8 11M14 0L6 11', N, '#222', 3],
        ['M2 0l8 10M14 0L6 10', N, '#f4f4f4', 1.8],
        [circle(4, 12.5, 2.2), N, '#222', 1.3],
        [circle(12, 12.5, 2.2), N, '#222', 1.3],
    ],
    copyClip: [['M1.500 .5h7l2 2v10h-9z', '#f4f4f4', '#333', 0.9], ['M5.500 3.500h6l4 3v9h-10z', '#f0f0f0', '#333', 0.9]],
};

const bigIcons: Record<string, Shape[]> = {
    line: [['M4 28L28 4', N, gray, 1.3], node(4, 28), node(29, 3)],
    pline: [['M3 23.500h16c15 0 15-17 0-17', N, gray, 1.3], node(3, 23), node(19, 23), node(19, 6)],
    circle: [[circle(16, 16, 14.5), 'url(#disc)', '#f6f6f6', 1], ['M16 16l10-10', N, '#4a90ff', 1.2], [box(14.5, 14.5, 3, 3), '#fff', '#4a90ff', 1]],
    arc: [['M3 29C4 14 13 4 28 3', N, gray, 1.3], node(3, 29), node(11, 12), node(29, 3)],
    text: [{ text: 'A', x: 4, y: 29, size: 35, fill: '#e2e2e2' }],
    dim: [
        ['M3.500 2v28M29.500 2v28', N, gray, 1.2],
        ['M5 6.500h23', N, '#5a9aff', 1.3],
        ['M4 6.500L8 4v5zM29 6.500L25 4v5z', '#5a9aff'],
        ['M16.500 18v4M10 20l3 3M23 20l-3 3M8 27h4M21 27h4', N, '#e86a10', 3.2],
        ['M16.500 18v4M10 20l3 3M23 20l-3 3M8 27h4M21 27h4', N, '#ffd040', 1.4],
    ],
    layers: [
        ['M3 23h14l6-7H9z', '#fff', '#222', 1],
        ['M3 18h14l6-7H9z', '#fff', '#222', 1],
        ['M4 12h14l5-8H11z', '#fff', '#222', 1],
        [box(18.5, 14.5, 12, 16), '#f2f4f6', '#222', 1],
        [box(20.5, 16.5, 5, 5), '#4a84c4', '#1c3c60', 1],
        ['M28.500 16v6M20 25.500h9M20 28.500h9', N, '#333', 1],
        ['M22.500 24v3M26.500 27v3', N, '#333', 1],
    ],
    insert: [
        ['M13.500 1.500h11l5 5v18h-16z', '#a9cbf0', '#e8f2ff', 1],
        ['M24 1.500v5h5.500', '#fff', '#7898c0', 0.8],
        ['M2.500 11.500h18v12h-18z', '#ededf0', '#333', 1],
        [circle(22.5, 22.5, 6.5), 'url(#disc)', '#444', 1],
        node(3, 24),
        ['M5 26.500h14', N, '#ddd', 1],
    ],
    match: [
        [box(2.5, 1.5, 20, 28), '#f4f4f4', '#3c3c3c', 1],
        [box(5, 4, 10, 10), '#3f74ac', '#1c3c5c', 1],
        ['M18.500 3v13', N, '#999', 3],
        ['M5 19.500h14M9.500 17v5M5 25.500h10', N, '#333', 1.2],
        ['M14 26l6-7 5 5c-2 6-6 7-12 6z', '#b86c2c', '#5c3010', 1],
        ['M22 20l7-6 2 2-6 7z', '#e8e0d0', '#444', 0.8],
    ],
    group: [
        ['M.5 2.500h20v29H.5z', N, '#c8c8c8', 1, '2 1'],
        [box(4.5, 6.5, 10, 9), '#f6eea0', '#222', 1.2],
        [circle(9.5, 25, 5), 'url(#disc)', '#222', 1.3],
        ['M20.500 2v20M10 12.500h21M14 5l14 15M14 20L28 5', N, '#8cc8ff', 1.8],
        ['M20.500 4v16M12 12.500h17', N, '#fff', 1.4],
        [circle(20.5, 12.5, 4), '#e8f6ff'],
    ],
    measure: [
        ['M2.500 9v9M30.500 9v9', N, '#eee', 1.2],
        ['M3 13.500h27', N, '#eee', 1],
        ['M3 13.500l4-2.500v5zM30 13.500L26 11v5z', '#eee'],
        [box(2.5, 20.5, 28, 5), '#f8c838', '#7c5808', 1],
        ['M5.500 21v2M8.500 21v2M11.500 21v2M14.500 21v2M17.500 21v2M20.500 21v2M23.500 21v2M26.500 21v2', N, '#7c5808', 1],
    ],
    paste: [
        [box(4.5, 4.5, 21, 24), '#b4a698', '#3c342c', 1],
        ['M9.500 3.500h3l1-2h4l1 2h4v4h-13z', '#e8e8e8', '#333', 1],
        ['M12.500 9.500h11l5 5v17h-16z', '#f4f4f8', '#222', 1.2],
        ['M23 9.500v5.500h5.500', '#fff', '#222', 1.2],
    ],
    base: [['M3.500 7.500h11v8h14v10h-25z', 'url(#disc)', '#222', 1]],
};

function Icon({ shapes, size = 16 }: { shapes: Shape[]; size?: number }) {
    return (
        <svg width={size} height={size} viewBox={`0 0 ${size} ${size}`} className="block shrink-0 overflow-hidden font-['Liberation_Sans','Noto_Sans_CJK_SC',sans-serif]" aria-hidden="true">
            <defs>
                <linearGradient id="disc" x1="0" y1="0" x2="0" y2="1">
                    <stop offset="0" stopColor="#fafafc" />
                    <stop offset="1" stopColor="#b9bcc8" />
                </linearGradient>
            </defs>
            {shapes.map((s, i) =>
                Array.isArray(s) ? (
                    <path key={i} d={s[0]} fill={s[1] || N} stroke={s[2] || N} strokeWidth={s[3]} strokeDasharray={s[4]} />
                ) : (
                    <text key={i} x={s.x} y={s.y} fontSize={s.size} fontWeight={s.bold ? 700 : 400} fill={s.fill}>
                        {s.text}
                    </text>
                ),
            )}
        </svg>
    );
}

function ColorWheel() {
    const colors = ['#f8e030', '#f09020', '#e03030', '#a040c0', '#4060d0', '#38a848'];
    return (
        <svg width="16" height="16" viewBox="-8 -8 16 16" className="block shrink-0" aria-hidden="true">
            {colors.map((c, i) => (
                <path key={c} d="M0 0L-3.700 -6.400A7.400 7.400 0 0 1 3.700 -6.400z" fill={c} transform={`rotate(${i * 60})`} />
            ))}
            <circle r="7.400" fill="none" stroke="#ddd" strokeWidth="0.800" />
        </svg>
    );
}

function Caret({ big, className }: { big?: boolean; className?: string }) {
    return (
        <svg width={big ? 8 : 5} height={big ? 4 : 3} viewBox="0 0 8 4" preserveAspectRatio="none" className={clsx('block shrink-0', className)} aria-hidden="true">
            <path d="M0 0h8L4 4z" fill="#f0f0f0" />
        </svg>
    );
}

// ---------- ribbon building blocks ----------

function Panel({ title, caret = true, launcher, className, children }: { title: string; caret?: boolean; launcher?: boolean; className: string; children: ReactNode }) {
    return (
        <section className={clsx('flex shrink-0 flex-col border-r border-[#3f3f3f] pl-px', className)}>
            <div className="flex h-[79px] border-l border-[#6a6a6a] pt-[5px]">{children}</div>
            <div
                className={clsx(
                    'relative mr-px flex h-[18px] items-center justify-center gap-1.5 bg-linear-to-b from-[#4a4a4a] to-[#434343] pt-0.5 text-white',
                    launcher && 'pr-3',
                )}
            >
                {title}
                {caret && <Caret big />}
                {launcher && (
                    <button aria-label={`${title}设置`} className="absolute right-1 bottom-1">
                        <svg width="6" height="6" viewBox="0 0 6 6" aria-hidden="true">
                            <path d="M0 0l5 5M5.500 1v4.500H1" fill="none" stroke="#eee" strokeWidth="1.200" />
                        </svg>
                    </button>
                )}
            </div>
        </section>
    );
}

function Big({ icon, label, second, caret, className = 'w-10' }: { icon: string; label: string; second?: string; caret?: boolean; className?: string }) {
    return (
        <button className={clsx('flex h-[72px] shrink-0 flex-col items-center pt-px leading-[17px] text-white', className)}>
            <Icon shapes={bigIcons[icon]} size={32} />
            <span className="mt-1 whitespace-nowrap">{label}</span>
            {second && <span className="whitespace-nowrap">{second}</span>}
            {caret && <Caret className="mt-[3px]" />}
        </button>
    );
}

function Small({ icon, label, text, caret, selected }: { icon: string; label: string; text?: boolean; caret?: boolean; selected?: boolean }) {
    return (
        <button
            aria-label={label}
            className={clsx('flex items-center whitespace-nowrap text-white', selected ? '-mx-1 my-px h-[22px] border border-[#1c2c48] bg-linear-to-b from-[#5a7cb0] to-[#7090c4] px-[3px]' : 'h-6')}
        >
            <Icon shapes={smallIcons[icon]} />
            {text && <span className="ml-[5px]">{label}</span>}
            {caret && <Caret className={text ? 'ml-2.5' : 'ml-1.5'} />}
        </button>
    );
}

function Combo({ label, value, children, className }: { label: string; value: string; children?: ReactNode; className?: string }) {
    return (
        <label className={clsx('my-px flex h-[22px] items-center border border-[#333] bg-linear-to-b from-[#5a5a5a] to-[#686868] pr-px text-white', className)}>
            {children}
            <select aria-label={label} className="min-w-0 flex-1 appearance-none bg-transparent outline-none">
                <option>{value}</option>
            </select>
            <Caret big />
        </label>
    );
}

function Toolbar({ groups }: { groups: string[] }) {
    return (
        <div role="toolbar" className="flex h-6 shrink-0 items-center gap-[7px] border border-[#3e3e3e] bg-[#5f5f5f] px-0.5">
            <span className="-mr-0.5 h-4 w-1 border-x-2 border-dotted border-[#303030]" />
            {groups.map((group, g) => (
                <div key={group} className="contents">
                    {g > 0 && <span className="-mr-0.5 h-[18px] w-px bg-[#909090]" />}
                    {group.split(' ').map((name) => (
                        <button key={name} aria-label={name} title={name} className="size-4 shrink-0 bg-[#c3c3c3]">
                            <Icon shapes={toolIcons[name]} />
                        </button>
                    ))}
                </div>
            ))}
        </div>
    );
}

const tabs = ['默认', '插入', '注释', '参数化', '视图', '管理', '输出', '附加模块', 'A360', '精选应用', '天正建筑'];

const menu = [
    '设　　置', '轴网柱子', '墙　　体', '门　　窗', '房间屋顶', '楼梯其他', '立　　面', '剖　　面', '文字表格', '尺寸标注', '符号标注',
    '图层控制', '工　　具', '图块图案', '建筑防火', '场地布置', '三维建模', '文件布图', '其　　它', '数据中心', '帮助演示',
];

function TitleBar() {
    return (
        <div className="flex h-8 items-end bg-white pl-[41px]">
            <div className="flex h-6 shrink-0 items-center gap-2 border-r border-[#555] bg-linear-to-b from-[#5a5a5a] to-[#7c7c7c] pr-1 pl-[9px]">
                {['new', 'open', 'save', 'saveas', 'print'].map((name) => (
                    <button key={name} aria-label={name}>
                        <Icon shapes={smallIcons[name]} />
                    </button>
                ))}
                <button aria-label="undo" className="flex items-center gap-[7px]">
                    <Icon shapes={smallIcons.undo} />
                    <Caret />
                </button>
                <button aria-label="redo" className="flex items-center gap-[7px]">
                    <Icon shapes={smallIcons.redo} />
                    <Caret />
                </button>
                <button aria-label="自定义快速访问工具栏" className="flex flex-col items-center gap-0.5">
                    <span className="h-px w-2 bg-white" />
                    <Caret big />
                </button>
            </div>
            <h1 className="flex h-8 flex-1 items-center justify-end gap-6 pr-[210px] whitespace-nowrap text-black">
                <span>T20天正建筑软件 V5.0 For Autodesk AutoCAD 2018</span>
                <span>Drawing1.dwg</span>
            </h1>
        </div>
    );
}

function AppButton() {
    return (
        <button aria-label="应用程序菜单" className="absolute top-2 left-0 flex h-[41px] w-[41px] items-center border border-black bg-linear-to-b from-[#c4c4c4] to-[#6c6c6c] pl-1">
            <svg width="24" height="28" viewBox="0 0 24 28" className="mb-1.5 shrink-0" aria-hidden="true">
                <path d="M8 1h8l7 25h-6l-3-12-2-7-3 10-4 10-5 1z" fill="#c41a20" />
                <path d="M8 1h4L7 20l-6 8 0-4z" fill="#e8494c" />
                <path d="M12 1h4l7 25-4-2z" fill="#9c1016" />
                <path d="M2 25c4-6 9-8 15-8l2 4c-7-1-12 1-17 5z" fill="#d8383c" />
                <path d="M5 21c4-4 8-5 12-5" fill="none" stroke="#f49a98" strokeWidth="1" />
            </svg>
            <svg width="7" height="4" viewBox="0 0 7 4" className="ml-0.5 shrink-0" aria-hidden="true">
                <path d="M0 0h7L3.500 4z" fill="#2a2a34" />
            </svg>
        </button>
    );
}

function TabBar() {
    const [active, setActive] = useState('默认');
    return (
        <nav className="flex h-[21px] items-end border-t border-b border-t-[#2e2e2e] border-b-[#353535] bg-[#535353] pl-[47px]">
            {tabs.map((tab) => (
                <button
                    key={tab}
                    onClick={() => setActive(tab)}
                    className={clsx(
                        'shrink-0 pt-0.5 leading-4',
                        tab === active ? '-mb-px mr-px h-[19px] rounded-t-sm border-x border-t border-[#7c7c7c] bg-[#626262] px-[7px] pb-px text-white' : 'h-[18px] px-2.5 text-[#d8d8d8]',
                    )}
                >
                    {tab}
                </button>
            ))}
            <button aria-label="最小化功能区" className="ml-6 flex h-[18px] items-center gap-1.5">
                <svg width="13" height="7" viewBox="0 0 13 7" aria-hidden="true">
                    <rect width="13" height="7" rx="2" fill="#eee" />
                    <path d="M4 5h5L6.500 2z" fill="#444" />
                </svg>
                <Caret />
            </button>
        </nav>
    );
}

function Ribbon() {
    return (
        <div className="flex overflow-hidden border-b border-[#2c2c2c] bg-[#5d5d5d]">
            <Panel title="绘图" className="w-[212px]">
                <div className="flex pl-px">
                    <Big icon="line" label="直线" />
                    <Big icon="pline" label="多段线" />
                    <Big icon="circle" label="圆" caret />
                    <Big icon="arc" label="圆弧" caret className="w-11" />
                </div>
                <div className="pl-1.5">
                    <Small icon="rect" label="矩形" caret />
                    <Small icon="ellipse" label="椭圆" caret />
                    <Small icon="hatch" label="图案填充" caret />
                </div>
            </Panel>
            <Panel title="修改" className="w-[227px]">
                <div className="ml-[5px] w-[59px]">
                    <Small icon="move" label="移动" text />
                    <Small icon="copy" label="复制" text />
                    <Small icon="stretch" label="拉伸" text />
                </div>
                <div className="w-[59px]">
                    <Small icon="rotate" label="旋转" text />
                    <Small icon="mirror" label="镜像" text />
                    <Small icon="scale" label="缩放" text />
                </div>
                <div className="w-[75px]">
                    <Small icon="trim" label="修剪" text caret />
                    <Small icon="fillet" label="圆角" text caret />
                    <Small icon="array" label="阵列" text caret />
                </div>
                <div>
                    <Small icon="brush" label="删除" />
                    <Small icon="solid" label="分解" />
                    <Small icon="offset" label="偏移" />
                </div>
            </Panel>
            <Panel title="注释" className="w-[155px]">
                <div className="flex pl-0.5">
                    <Big icon="text" label="文字" caret className="w-[42px]" />
                    <Big icon="dim" label="标注" className="w-[42px]" />
                </div>
                <div className="pl-0.5">
                    <Small icon="linear" label="线性" text caret />
                    <Small icon="leader" label="引线" text caret />
                    <Small icon="table" label="表格" text />
                </div>
            </Panel>
            <Panel title="图层" className="w-[252px]">
                <Big icon="layers" label="图层" second="特性" />
                <div className="flex-1 pr-0.5">
                    <Combo label="图层列表" value="0">
                        <div className="mr-1.5 ml-[3px] flex items-center gap-[3px]">
                            <Icon shapes={smallIcons.lightbulb} />
                            <Icon shapes={smallIcons.sun} />
                            <Icon shapes={smallIcons.unlock} />
                            <span className="ml-0.5 size-3.5 border border-black bg-white" />
                        </div>
                    </Combo>
                    <div className="flex gap-2 pl-1">
                        <Small icon="layOff" label="关" />
                        <Small icon="layIso" label="隔离" />
                        <Small icon="layFrz" label="冻结" />
                        <Small icon="layLck" label="锁定" />
                        <Small icon="layCur" label="置为当前" text />
                    </div>
                    <div className="flex gap-2 pl-1">
                        <Small icon="layOn" label="打开" />
                        <Small icon="layUniso" label="取消隔离" />
                        <Small icon="layThw" label="解冻" />
                        <Small icon="layUlk" label="解锁" />
                        <Small icon="layMch" label="匹配图层" text />
                    </div>
                </div>
            </Panel>
            <Panel title="块" className="w-[135px]">
                <Big icon="insert" label="插入" caret />
                <div className="pl-1">
                    <Small icon="blkCreate" label="创建" text />
                    <Small icon="blkEdit" label="编辑" text />
                    <Small icon="attEdit" label="编辑属性" text caret />
                </div>
            </Panel>
            <Panel title="特性" launcher className="w-[244px]">
                <Big icon="match" label="特性" second="匹配" />
                <div className="flex flex-1 flex-col pr-0.5">
                    <div className="flex items-center gap-0.5 pl-px">
                        <ColorWheel />
                        <Combo label="对象颜色" value="ByLayer" className="flex-1">
                            <span className="mr-2.5 ml-3 size-4 border border-[#aaa] bg-white" />
                        </Combo>
                    </div>
                    <div className="flex items-center gap-0.5 pl-px">
                        <Icon shapes={smallIcons.lineweight} />
                        <Combo label="线宽" value="ByLayer" className="flex-1">
                            <span className="mr-0.5 ml-2 h-px w-[59px] bg-white" />
                        </Combo>
                    </div>
                    <div className="flex items-center gap-0.5 pl-px">
                        <Icon shapes={smallIcons.linetype} />
                        <Combo label="线型" value="ByLayer" className="flex-1">
                            <span className="mr-0.5 ml-[3px] h-px w-16 bg-white" />
                        </Combo>
                    </div>
                </div>
            </Panel>
            <Panel title="组" className="w-[67px]">
                <Big icon="group" label="组" />
                <div className="pl-1">
                    <Small icon="grpEdit" label="组编辑" />
                    <Small icon="grpAdd" label="添加到组" />
                    <Small icon="grpSel" label="启用组选择" selected />
                </div>
            </Panel>
            <Panel title="实用工具" className="w-[77px]">
                <Big icon="measure" label="测量" caret className="w-12" />
                <div className="pl-1">
                    <Small icon="quick" label="快速选择" />
                    <Small icon="point" label="点坐标" />
                    <Small icon="calc" label="快速计算器" />
                </div>
            </Panel>
            <Panel title="剪贴板" caret={false} className="w-[76px]">
                <Big icon="paste" label="粘贴" caret className="w-12" />
                <div className="pl-0.5">
                    <Small icon="cut" label="剪切" />
                    <Small icon="copyClip" label="复制裁剪" />
                </div>
            </Panel>
            <Panel title="视图" launcher className="w-[60px]">
                <Big icon="base" label="基点" caret className="w-full" />
            </Panel>
        </div>
    );
}

function ScreenMenu() {
    return (
        <aside className="flex w-[154px] shrink-0 flex-col border-r-2 border-[#5d5d5d] bg-[#f0f0f0]">
            <div className="bg-[#5d5d5d] pt-0.5 pb-1">
                <div className="flex h-[23px] items-center rounded-t bg-[#4f4f4f] pb-[3px] pl-[15px] text-white">T20天正建筑软...</div>
            </div>
            <ul className="py-0.5">
                {menu.map((item) => (
                    <li key={item}>
                        <button className="flex h-[18px] w-full items-center gap-[15px] pl-2 text-black">
                            <svg width="5" height="8" viewBox="0 0 5 8" className="shrink-0" aria-hidden="true">
                                <path d="M0 0l5 4-5 4z" fill="#2b62a0" />
                            </svg>
                            {item}
                        </button>
                    </li>
                ))}
            </ul>
        </aside>
    );
}

function Canvas() {
    return (
        <main className="relative flex-1 overflow-hidden bg-black">
            <p className="pt-[5px] pl-[3px] text-[#e8e8e8]">[−][俯视][二维线框]</p>
            {/* crosshair cursor */}
            <svg width="129" height="129" viewBox="0 0 129 129" className="absolute top-[125px] left-[288px]" aria-hidden="true">
                <path d="M64.500 0v61M64.500 68v61M0 64.500h61M68 64.500h61" stroke="#d8d8d8" fill="none" />
                <rect x="61.500" y="61.500" width="6" height="6" stroke="#fff" fill="none" />
            </svg>
        </main>
    );
}

export default function App() {
    return (
        <div className="flex min-h-screen overflow-hidden bg-[#f0f0f0] font-['Noto_Sans','Noto_Sans_CJK_SC',sans-serif] text-[12px] leading-[18px]">
            <div className="flex w-3 shrink-0 flex-col border-r border-[#bdbdbd] bg-linear-to-r from-[#f2f2f2] to-[#dedede]">
                <div className="h-[34px] bg-linear-to-r from-[#e4e4e4] to-[#d6d6d6]" />
                <div className="mt-10 ml-[3px] flex-1 rounded-tl-lg border-t border-l border-[#d2d2d2]" />
            </div>
            <div className="relative flex min-w-0 flex-1 flex-col">
                <TitleBar />
                <AppButton />
                <TabBar />
                <Ribbon />
                <div className="flex flex-col gap-[3px] overflow-hidden border-t border-[#8a8a8a] bg-[#5d5d5d] pt-0.5 pb-1">
                    {toolRows.map((row, r) => (
                        <div key={r} className="flex gap-0.5">
                            {row.map((groups) => (
                                <Toolbar key={groups[0]} groups={groups} />
                            ))}
                        </div>
                    ))}
                </div>
                <div className="flex flex-1">
                    <ScreenMenu />
                    <Canvas />
                </div>
            </div>
        </div>
    );
}
